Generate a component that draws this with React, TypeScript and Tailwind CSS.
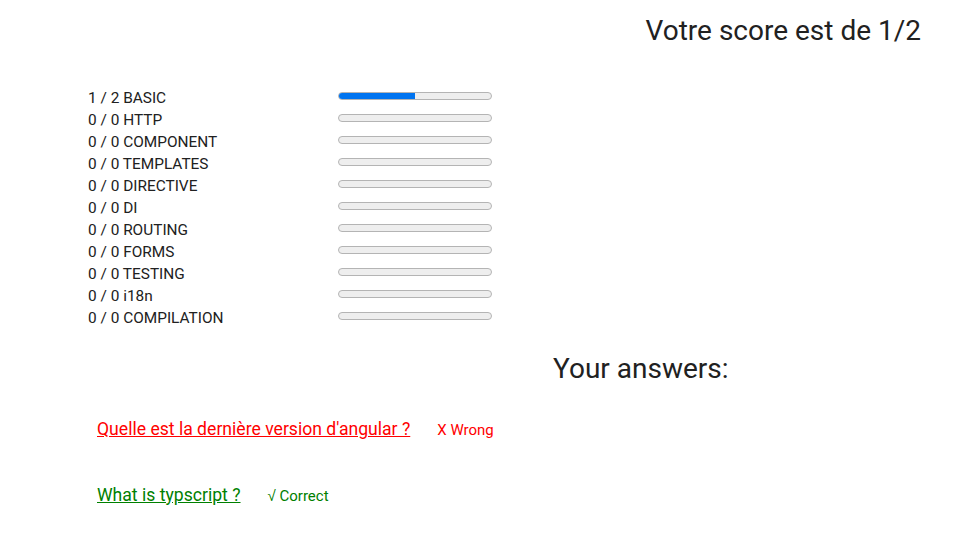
import React from 'react';

interface Category {
  name: string;
  good: number;
  total: number;
}

const categories: Category[] = [
  { name: 'BASIC', good: 1, total: 2 },
  { name: 'HTTP', good: 0, total: 0 },
  { name: 'COMPONENT', good: 0, total: 0 },
  { name: 'TEMPLATES', good: 0, total: 0 },
  { name: 'DIRECTIVE', good: 0, total: 0 },
  { name: 'DI', good: 0, total: 0 },
  { name: 'ROUTING', good: 0, total: 0 },
  { name: 'FORMS', good: 0, total: 0 },
  { name: 'TESTING', good: 0, total: 0 },
  { name: 'i18n', good: 0, total: 0 },
  { name: 'COMPILATION', good: 0, total: 0 },
];

const answers = [
  { question: "Quelle est la dernière version d'angular ?", correct: false },
  { question: 'What is typscript ?', correct: true },
];

export default function App() {
  return (
    <div className="min-h-screen bg-white text-[#212121] font-['Roboto',sans-serif]">
      <h1 className="pt-[14px] pr-[54px] text-right text-[28px] leading-[34px] font-normal">
        Votre score est de 1/2
      </h1>

      {/* Per-category progress */}
      <div className="mt-[39px] pl-[88px] flex flex-col">
        {categories.map(c => {
          const pct = c.total ? (c.good / c.total) * 100 : 0;
          return (
            <div key={c.name} className="flex items-start h-[22px]">
              <span className="w-[250px] text-[15.4px] leading-[22px]">
                {c.good} / {c.total} {c.name}
              </span>
              <div className="mt-[5px] w-[154px] h-[8px] rounded-full border border-[#b4b4b4] bg-[#eeeeee] overflow-hidden">
                <div className="h-full bg-[#0074f0]" style={{ width: `${pct}%` }} />
              </div>
            </div>
          );
        })}
      </div>

      <h2 className="mt-[23px] pl-[553px] text-[28px] leading-[34px] font-normal">Your answers:</h2>

      <div className="mt-[30px] pl-[97px] flex flex-col gap-[44px]">
        {answers.map(a => (
          <div
            key={a.question}
            className={`flex items-baseline h-[22px] ${a.correct ? 'text-[#008000]' : 'text-[#ff0000]'}`}
          >
            <a href="#" className="text-[17.6px] underline">
              {a.question}
            </a>
            <span className="ml-[27px] text-[15px]">
              {a.correct ? (
                <>
                  <span className="font-['DejaVu_Sans',sans-serif] font-light">√</span> Correct
                </>
              ) : (
                'X Wrong'
              )}
            </span>
          </div>
        ))}
      </div>
    </div>
  );
}
